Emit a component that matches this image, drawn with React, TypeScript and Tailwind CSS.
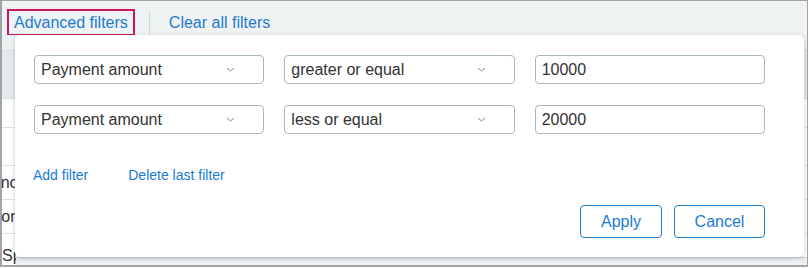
import React from "react";

const font = { fontFamily: '"Liberation Sans", Arial, sans-serif' };

function Chevron() {
  return (
    <svg width="9" height="5" viewBox="0 0 9 5" className="shrink-0">
      <path d="M1 1 L4.5 4 L8 1" fill="none" stroke="#7a8a90" strokeWidth="1" />
    </svg>
  );
}

function Select({ label }: { label: string }) {
  return (
    <div className="flex h-[29px] items-center justify-between rounded-[4px] border border-[#a9b8be] bg-white pl-[6px] pr-[28px] text-[16px] text-[#333]">
      <span>{label}</span>
      <Chevron />
    </div>
  );
}

function Input({ value }: { value: string }) {
  return (
    <div className="flex h-[29px] items-center rounded-[4px] border border-[#a9b8be] bg-white pl-[6px] text-[16px] text-[#333]">
      {value}
    </div>
  );
}

export default function App() {
  return (
    <div style={font} className="relative h-[268px] w-[809px] overflow-hidden bg-white">
      <div className="flex h-[267px] w-[808px] flex-col overflow-hidden border border-[#a0a4a6] border-b-2 border-l-2">
        {/* top bar */}
        <div className="flex h-[34px] shrink-0 items-center bg-[#f0f3f4] pl-[5px]">
          <div className="mt-[9px] flex h-[27px] items-center border-2 border-[#c8175d] px-[5px] text-[16px] text-[#1b7bd1]">
            Advanced filters
          </div>
          <div className="ml-[14px] mt-[9px] h-[22px] w-px bg-[#cdd5d8]" />
          <div className="ml-[19px] mt-[9px] text-[16px] text-[#1b7bd1]">Clear all filters</div>
        </div>
        {/* table behind */}
        <div className="flex flex-1 flex-col text-[16px] leading-[20px] text-[#333]">
          <div className="h-[16px] shrink-0 border-b border-[#d6dde0] bg-[#eef2f3]" />
          <div className="h-[48px] shrink-0 border-b border-[#d6dde0] bg-[#e4eaec]" />
          <div className="h-[29px] shrink-0 border-b border-[#dde3e5]" />
          <div className="h-[38px] shrink-0 border-b border-[#dde3e5]" />
          <div className="flex h-[34px] shrink-0 items-center border-b border-[#dde3e5]">
            <span className="-ml-[20px] whitespace-nowrap">Sync</span>
          </div>
          <div className="flex h-[34px] shrink-0 items-center border-b border-[#dde3e5]">
            <span className="-ml-[22px] whitespace-nowrap">Error</span>
          </div>
          <div className="flex flex-1">
            <div className="w-[14px] shrink-0 overflow-hidden pt-[12px]">
              <span className="whitespace-nowrap">Spent</span>
            </div>
            <div className="flex flex-1 flex-col justify-end">
              <div className="h-[9px] border-t border-[#cfd6d9] bg-gradient-to-b from-[#e6ecee] to-[#f3f6f7]" />
            </div>
          </div>
        </div>
      </div>

      {/* overlay panel */}
      <div className="absolute left-[15px] top-[35px] h-[222px] w-[789px] rounded-[5px] bg-white pl-[19px] pt-[20px] shadow-[0_1px_4px_rgba(80,100,110,0.35)]">
        <div className="grid w-[731px] grid-cols-3 gap-x-[20px] gap-y-[21px]">
          <Select label="Payment amount" />
          <Select label="greater or equal" />
          <Input value="10000" />
          <Select label="Payment amount" />
          <Select label="less or equal" />
          <Input value="20000" />
        </div>
        <div className="mt-[31px] flex gap-[40px] text-[14px] text-[#1b7bd1]">
          <span className="-ml-px">Add filter</span>
          <span>Delete last filter</span>
        </div>
        <div className="mt-[19px] flex w-[731px] justify-end gap-[12px]">
          <button className="h-[33px] w-[82px] rounded-[4px] border border-[#1b7bd1] text-[16px] text-[#1b7bd1]">
            Apply
          </button>
          <button className="h-[33px] w-[91px] rounded-[4px] border border-[#1b7bd1] text-[16px] text-[#1b7bd1]">
            Cancel
          </button>
        </div>
      </div>
    </div>
  );
}
